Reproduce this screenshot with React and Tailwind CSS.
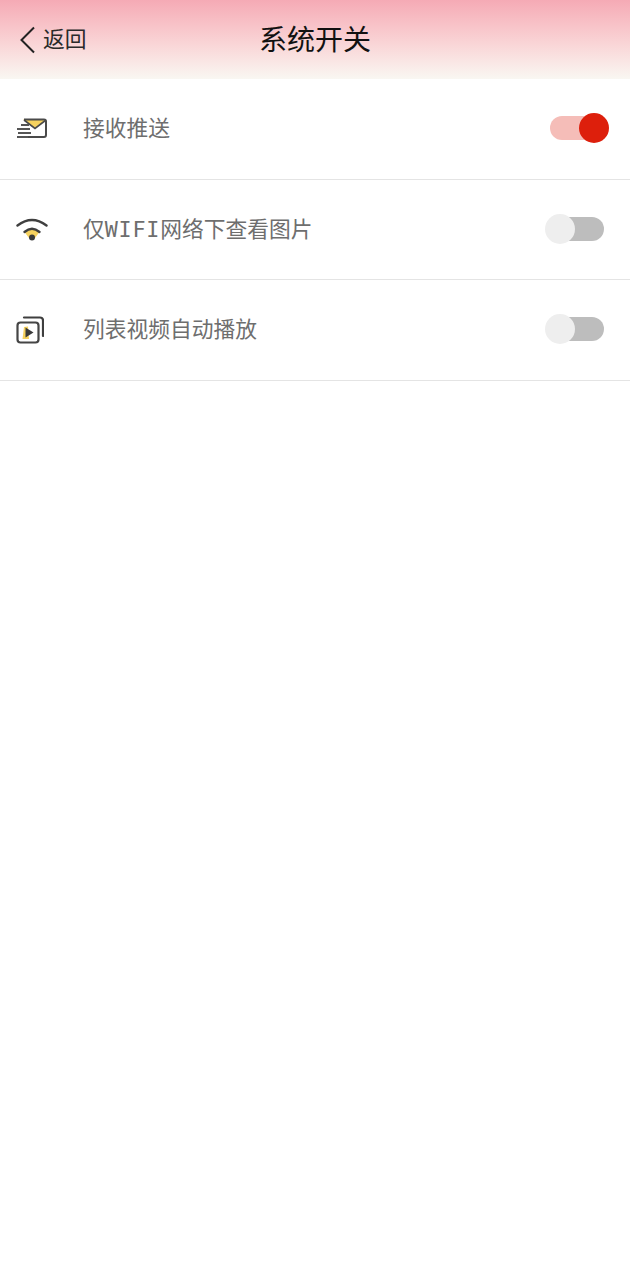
import React from "react";

const cjk = { fontFamily: '"DejaVu Sans Mono", "Noto Sans CJK SC", monospace' };

function MailIcon() {
  return (
    <svg width="32" height="22" viewBox="0 0 32 22" fill="none">
      <path d="M7 1.5 H30 L19 10 Z" fill="#f6d25f" />
      <path d="M8 1.5 H28 Q30 1.5 30 3.5 V17 Q30 19 28 19 H11" stroke="#4a4a4a" strokeWidth="2" />
      <path d="M8 2 L19 10.5 L30 2" stroke="#4a4a4a" strokeWidth="1.6" />
      <path d="M5 7 H13 M1 11 H14 M2 15 H15 M1 19 H12" stroke="#555" strokeWidth="1.8" />
    </svg>
  );
}

function WifiIcon() {
  return (
    <svg width="32" height="24" viewBox="0 1 32 24" fill="none">
      <path d="M1.5 8.5 Q16 -2.5 30.5 8.5" stroke="#3f3f3f" strokeWidth="2.4" strokeLinecap="round" />
      <path d="M8.5 15 Q16 8 23.5 15 L19 21 H13 Z" fill="#f6d25f" />
      <path d="M8.5 15 Q16 8.5 23.5 15" stroke="#3f3f3f" strokeWidth="2.4" strokeLinecap="round" />
      <circle cx="16" cy="20.5" r="3" fill="#3a3a3a" />
    </svg>
  );
}

function PlayIcon() {
  return (
    <svg width="28" height="28" viewBox="0 0 28 28" fill="none">
      <path d="M8 1.5 H24 Q27 1.5 27 4.5 V20" stroke="#3f3f3f" strokeWidth="2.2" strokeLinecap="round" />
      <rect x="1.5" y="6.5" width="21" height="20" rx="3" stroke="#454545" strokeWidth="2.2" />
      <path d="M8 11 L12 10.5 L13 23 L6.5 23 Z" fill="#f6d25f" />
      <path d="M9.5 11.5 L17.5 16.5 L9.5 21.5 Z" fill="#3a3a3a" />
    </svg>
  );
}

function Toggle({ on }) {
  return (
    <div className="relative w-[64px] h-[30px] shrink-0 mb-[2px]">
      {on ? (
        <>
          <div className="absolute left-[5px] right-[5px] top-[3px] h-[24px] rounded-full bg-[#f5bdb8]" />
          <div className="absolute right-0 top-0 w-[30px] h-[30px] rounded-full bg-[#dd1f0c]" />
        </>
      ) : (
        <>
          <div className="absolute left-[5px] right-[5px] top-[3px] h-[24px] rounded-full bg-[#bdbdbd]" />
          <div className="absolute left-0 top-0 w-[30px] h-[30px] rounded-full bg-[#eeeeee]" />
        </>
      )}
    </div>
  );
}

function Row({ icon, label, on, h }) {
  return (
    <div className={`flex items-center border-b border-[#e4e4e4] pl-[16px] pr-[21px] ${h}`}>
      <div className="w-[67px] flex items-center">{icon}</div>
      <div className="flex-1 text-[21.75px] text-[#6e6e6e] leading-[30px]" style={cjk}>{label}</div>
      <Toggle on={on} />
    </div>
  );
}

export default function App() {
  return (
    <div className="w-[630px] min-h-[1280px] bg-white" style={cjk}>
      <header className="relative h-[79px] flex items-center justify-center bg-gradient-to-b from-[#f5aab5] to-[#f9f7f2]">
        <div className="absolute left-[19px] top-[25px] flex items-center">
          <svg width="17" height="28" viewBox="0 0 17 28" fill="none">
            <path d="M15 1.5 L2.5 14 L15 26.5" stroke="#222" strokeWidth="2" />
          </svg>
          <span className="ml-[7px] text-[21.75px] leading-[30px] text-[#2a2a2a]">返回</span>
        </div>
        <h1 className="text-[28px] font-normal text-[#111111] leading-[40px] mt-[2px]">系统开关</h1>
      </header>
      <Row h="h-[101px]" icon={<MailIcon />} label="接收推送" on />
      <Row h="h-[100px]" icon={<WifiIcon />} label={<>仅<span className="tracking-[0.75px]">WIFI</span>网络下查看图片</>} />
      <Row h="h-[101px]" icon={<PlayIcon />} label="列表视频自动播放" />
    </div>
  );
}
